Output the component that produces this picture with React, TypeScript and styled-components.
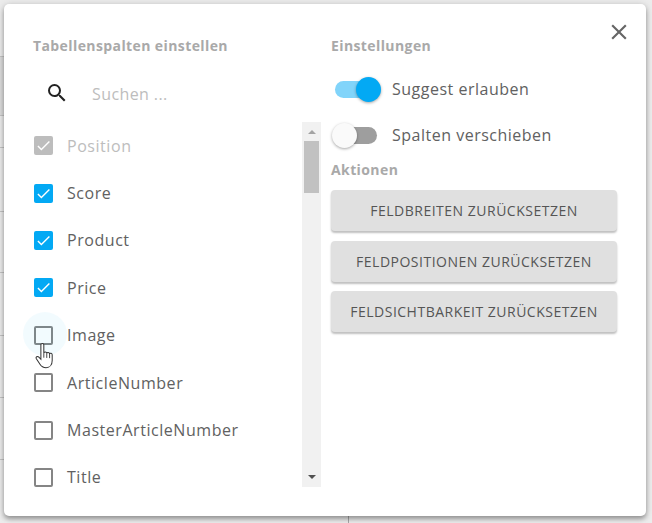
import { createGlobalStyle, styled } from 'styled-components';
import { MdClose, MdSearch, MdCheck } from 'react-icons/md';

const GlobalStyle = createGlobalStyle`
  html, body {
    margin: 0;
    padding: 0;
    background: #ececec;
  }
  body {
    font-family: "Open Sans", "Liberation Sans", sans-serif;
  }
`;

const Backdrop = styled.div`
  position: relative;
  width: 652px;
  height: 523px;
  overflow: hidden;
  padding: 4px 6px 7px 4px;
  box-sizing: border-box;
  background: #ececec;
`;

const HeaderBand = styled.div`
  position: absolute;
  left: 0;
  top: 56px;
  width: 4px;
  height: 59px;
  background: #dcdcdc;
`;

const Rule = styled.div<{ $top: number }>`
  position: absolute;
  left: 0;
  top: ${(p) => p.$top}px;
  width: 4px;
  height: 1px;
  background: #c4c4c4;
`;

const ColumnLine = styled.div`
  position: absolute;
  left: 348px;
  bottom: 0;
  width: 1px;
  height: 7px;
  background: #a8a8a8;
`;

const Dialog = styled.div`
  position: relative;
  display: grid;
  grid-template-columns: 288px 1fr;
  column-gap: 10px;
  height: 100%;
  box-sizing: border-box;
  padding: 34px 29px 29px 29px;
  background: #fff;
  border-radius: 5px;
  box-shadow: 0 3px 5px rgba(0, 0, 0, 0.35), 0 0 8px rgba(0, 0, 0, 0.1);
`;

const CloseButton = styled.button`
  position: absolute;
  top: 15px;
  right: 14px;
  display: flex;
  padding: 0;
  border: 0;
  background: none;
  color: #666;
  font-size: 26px;
`;

const Column = styled.div`
  display: flex;
  flex-direction: column;
  min-height: 0;
`;

const Heading = styled.h2`
  margin: 0;
  font-size: 14px;
  line-height: 16px;
  letter-spacing: 0.4px;
  font-weight: 700;
  color: #a9a9a9;
`;

const ActionsHeading = styled(Heading)`
  margin-top: 4px;
`;

const SearchRow = styled.div`
  display: flex;
  align-items: center;
  height: 32px;
  margin: 23px 0 13px;
  padding-left: 12px;
  color: #222;
  font-size: 24px;
`;

const SearchInput = styled.span`
  margin-left: 23px;
  padding-top: 2px;
  font-size: 16px;
  letter-spacing: 0.4px;
  color: #bdbdbd;
`;

const ListFrame = styled.div`
  display: flex;
  flex: 1;
  min-height: 0;
`;

const List = styled.ul`
  flex: 1;
  margin: 0;
  padding: 0;
  list-style: none;
`;

const Item = styled.li<{ $disabled?: boolean }>`
  display: flex;
  align-items: center;
  height: 47.4px;
  font-size: 16px;
  letter-spacing: 0.55px;
  color: ${(p) => (p.$disabled ? '#bdbdbd' : '#616161')};
`;

const Box = styled.span<{ $state: 'on' | 'off' | 'disabled' }>`
  position: relative;
  display: flex;
  align-items: center;
  justify-content: center;
  box-sizing: border-box;
  width: 19px;
  height: 19px;
  margin: 0 14px 0 1px;
  border-radius: 2px;
  color: #fff;
  font-size: 17px;
  border: ${(p) => (p.$state === 'off' ? '2px solid #858585' : '0')};
  background: ${(p) =>
    p.$state === 'on' ? '#03a9f4' : p.$state === 'disabled' ? '#bdbdbd' : 'transparent'};
`;

const Ripple = styled.span`
  position: absolute;
  left: -13px;
  top: -16px;
  width: 44px;
  height: 44px;
  border-radius: 50%;
  background: rgba(3, 169, 244, 0.05);
`;

const Cursor = styled.svg`
  position: absolute;
  left: -1px;
  top: 15px;
  width: 19px;
  height: 26px;
`;

const Scrollbar = styled.div`
  display: flex;
  flex-direction: column;
  align-items: center;
  width: 19px;
  background: #f1f1f1;
`;

const ArrowUp = styled.span`
  width: 0;
  height: 0;
  margin: 8px 0 7px;
  border-left: 4px solid transparent;
  border-right: 4px solid transparent;
  border-bottom: 4px solid #a3a3a3;
`;

const ArrowDown = styled.span`
  width: 0;
  height: 0;
  margin-bottom: 8px;
  border-left: 4px solid transparent;
  border-right: 4px solid transparent;
  border-top: 4px solid #505050;
`;

const Thumb = styled.div`
  width: 15px;
  height: 52px;
  background: #c1c1c1;
`;

const Spacer = styled.div`
  flex: 1;
`;

const Switches = styled.div`
  margin-top: 12px;
`;

const SwitchRow = styled.div`
  display: flex;
  align-items: center;
  height: 46px;
  font-size: 16px;
  letter-spacing: 0.5px;
  color: #616161;
`;

const Track = styled.span<{ $on?: boolean }>`
  position: relative;
  width: 42px;
  height: 17px;
  margin: 0 15px 0 4px;
  border-radius: 9px;
  background: ${(p) => (p.$on ? '#81d4fa' : '#9e9e9e')};
`;

const Knob = styled.span<{ $on?: boolean }>`
  position: absolute;
  top: -4px;
  ${(p) => (p.$on ? 'right: -4px;' : 'left: -3px;')}
  width: 25px;
  height: 25px;
  border-radius: 50%;
  background: ${(p) => (p.$on ? '#03a9f4' : '#fafafa')};
  box-shadow: 0 1px 3px rgba(0, 0, 0, 0.35);
`;

const Actions = styled.div`
  display: flex;
  flex-direction: column;
  gap: 9.5px;
  margin-top: 12px;
`;

const ActionButton = styled.button`
  height: 41px;
  padding: 0;
  border: 0;
  border-radius: 4px;
  background: #e0e0e0;
  box-shadow: 0 2px 2px rgba(0, 0, 0, 0.25);
  font-family: inherit;
  font-size: 14px;
  letter-spacing: 0.5px;
  color: #555;
  text-transform: uppercase;
`;

const columns: { label: string; state: 'on' | 'off' | 'disabled' }[] = [
  { label: 'Position', state: 'disabled' },
  { label: 'Score', state: 'on' },
  { label: 'Product', state: 'on' },
  { label: 'Price', state: 'on' },
  { label: 'Image', state: 'off' },
  { label: 'ArticleNumber', state: 'off' },
  { label: 'MasterArticleNumber', state: 'off' },
  { label: 'Title', state: 'off' },
];

const actions = ['Feldbreiten zurücksetzen', 'Feldpositionen zurücksetzen', 'Feldsichtbarkeit zurücksetzen'];

const App = () => {
  return (
    <>
      <GlobalStyle />
      <Backdrop>
        <HeaderBand />
        {[56, 115, 147, 211, 272, 335, 397, 459].map((top) => (
          <Rule key={top} $top={top} />
        ))}
        <ColumnLine />
        <Dialog>
          <CloseButton aria-label="close">
            <MdClose />
          </CloseButton>
          <Column>
            <Heading>Tabellenspalten einstellen</Heading>
            <SearchRow>
              <MdSearch />
              <SearchInput>Suchen ...</SearchInput>
            </SearchRow>
            <ListFrame>
              <List>
                {columns.map((c) => (
                  <Item key={c.label} $disabled={c.state === 'disabled'}>
                    <Box $state={c.state}>
                      {c.label === 'Image' && <Ripple />}
                      {c.state !== 'off' && <MdCheck />}
                      {c.label === 'Image' && (
                        <Cursor viewBox="1.4 0.6 15.6 23">
                          <path
                            d="M6 2.2c0-1.5 2.6-1.5 2.6 0v7.4c.2-1.4 2.5-1.3 2.6.2.3-1.2 2.3-1 2.5.4.5-1 2.2-.7 2.3.8v5c0 3.6-2 6.4-5.4 6.4-2.8 0-4.2-1-5.4-3L2 14.6c-.9-1.5 1-2.8 2.2-1.5L6 15z"
                            fill="#fff"
                            stroke="#333"
                            strokeWidth="0.9"
                          />
                          <path d="M8.6 9.6v4M11.2 9.8v4M13.7 10.6v3.4" stroke="#333" strokeWidth="0.8" fill="none" />
                        </Cursor>
                      )}
                    </Box>
                    {c.label}
                  </Item>
                ))}
              </List>
              <Scrollbar>
                <ArrowUp />
                <Thumb />
                <Spacer />
                <ArrowDown />
              </Scrollbar>
            </ListFrame>
          </Column>
          <Column>
            <Heading>Einstellungen</Heading>
            <Switches>
              <SwitchRow>
                <Track $on>
                  <Knob $on />
                </Track>
                Suggest erlauben
              </SwitchRow>
              <SwitchRow>
                <Track>
                  <Knob />
                </Track>
                Spalten verschieben
              </SwitchRow>
            </Switches>
            <ActionsHeading>Aktionen</ActionsHeading>
            <Actions>
              {actions.map((a) => (
                <ActionButton key={a}>{a}</ActionButton>
              ))}
            </Actions>
          </Column>
        </Dialog>
      </Backdrop>
    </>
  );
};

export default App;
